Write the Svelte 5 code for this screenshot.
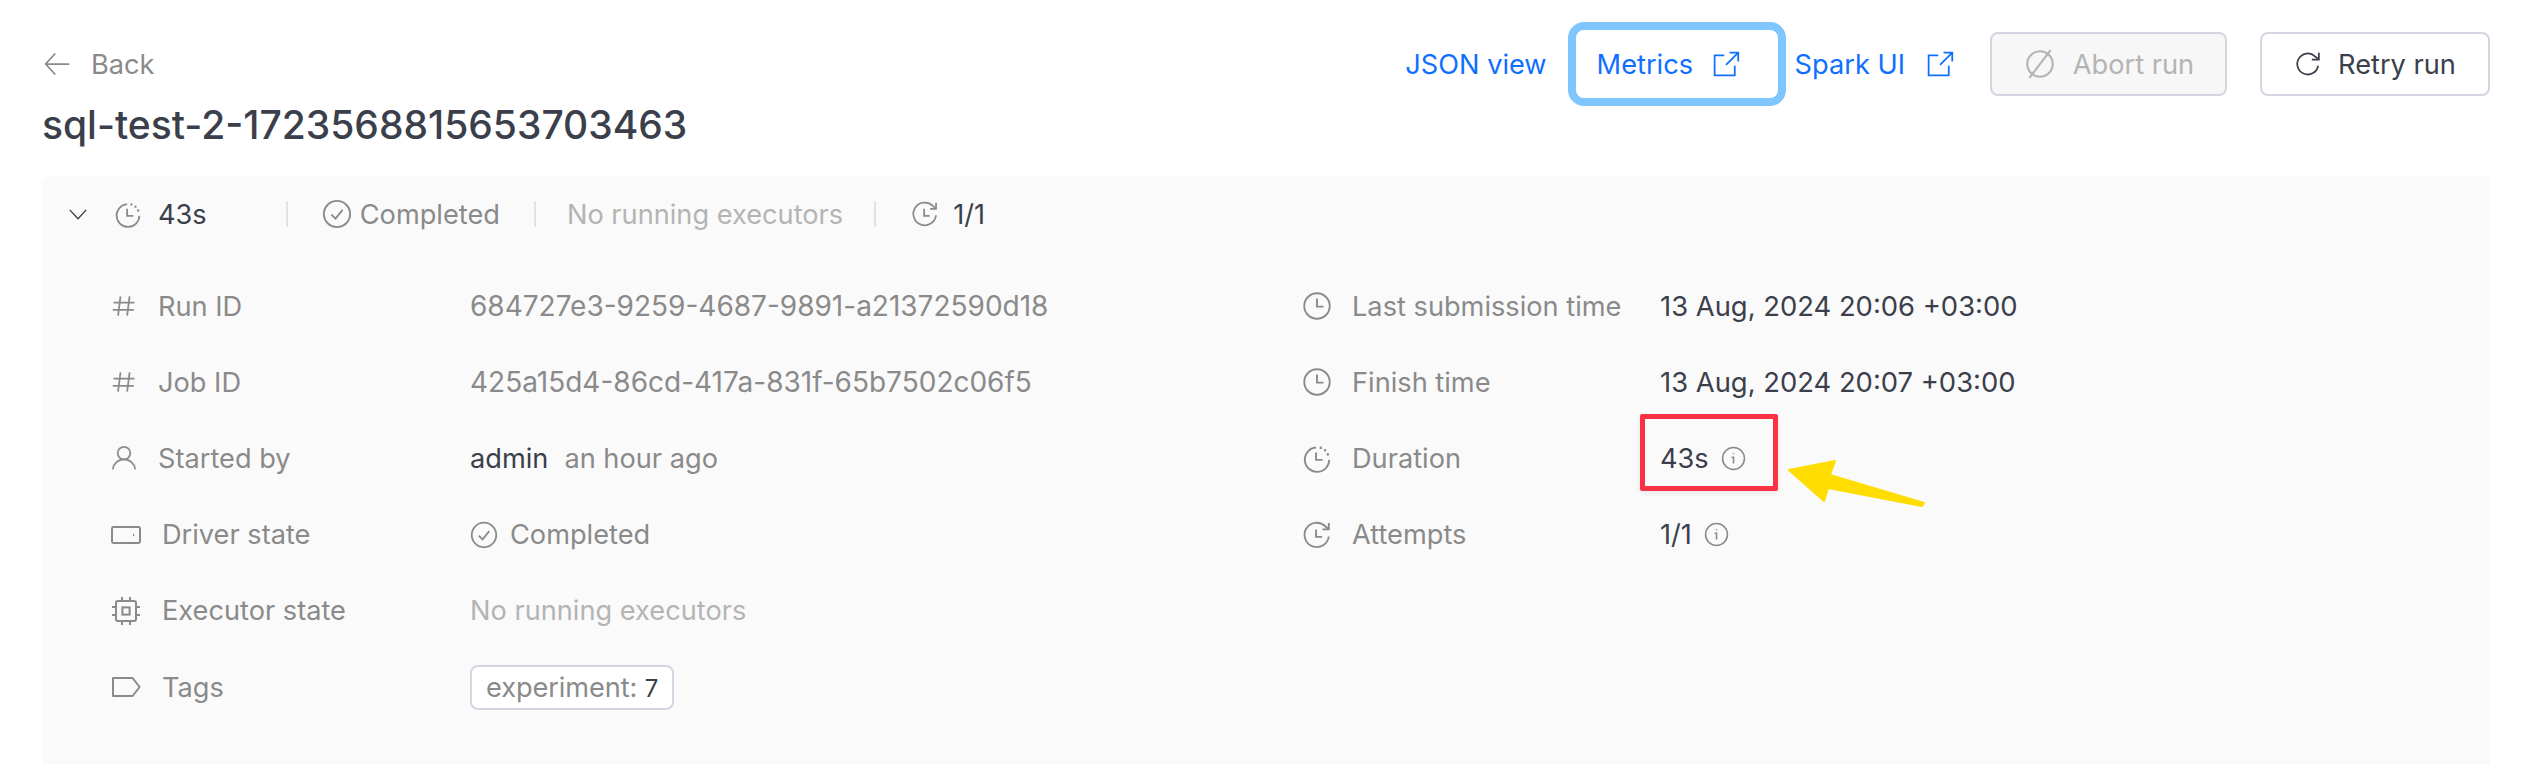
<script>
	const leftRows = [
		{ icon: 'hash', size: 28, label: 'Run ID' },
		{ icon: 'hash', size: 28, label: 'Job ID' },
		{ icon: 'user', size: 28, label: 'Started by' },
		{ icon: 'drive', size: 32, label: 'Driver state' },
		{ icon: 'chip', size: 32, label: 'Executor state' },
		{ icon: 'tag', size: 32, label: 'Tags' }
	];
</script>

{#snippet icon(name, size = 28)}
	<svg class="icon" width={size} height={size} viewBox="0 0 16 16" fill="none" stroke="currentColor" stroke-width="1">
		{#if name === 'hash'}
			<path d="M6 2.5 4.600 13.500M11.200 2.500 9.800 13.500M2 6h12M1.600 10.200h12" />
		{:else if name === 'user'}
			<circle cx="8" cy="5.200" r="3.600" />
			<path d="M1.500 14.500c.4-3 3-5.700 6.500-5.700s6.100 2.700 6.500 5.700" />
		{:else if name === 'drive'}
			<rect x="1" y="4" width="14" height="8" rx=".7" />
			<path d="M11.500 8h.6" stroke-width="1.200" />
		{:else if name === 'chip'}
			<rect x="3" y="3" width="10" height="10" rx="1" />
			<rect x="6.200" y="6.200" width="3.600" height="3.600" />
			<path d="M6 1v2M10 1v2M6 13v2M10 13v2M1 6h2M1 10h2M13 6h2M13 10h2" />
		{:else if name === 'tag'}
			<path d="M1.500 3.500h9.800L14.800 8l-3.500 4.500H1.500z" stroke-linejoin="round" />
		{:else if name === 'clock'}
			<circle cx="8" cy="8" r="6.800" />
			<path d="M8 4v4.300h3.500" />
		{:else if name === 'duration'}
			<path d="M7.500 2.400A6.500 6.500 0 1 0 14.500 9" />
			<path d="M7.500 5v4h3.500" />
			<path d="M10 2.500v.1M12.300 3.800v.1M13.800 6v.1" stroke-width="1.300" stroke-linecap="round" />
		{:else if name === 'attempts'}
			<path d="M14.300 8.800A6.500 6.500 0 1 1 12.300 3.200L14 4.800" />
			<path d="M14.300 1.600v3.400h-3.400" />
			<path d="M7.500 5v4h3.200" />
		{:else if name === 'check'}
			<circle cx="8" cy="8" r="7" />
			<path d="M5 8.300 7.200 10.500 11 5.800" />
		{:else if name === 'info'}
			<circle cx="8" cy="8" r="7" />
			<path d="M6.800 7.200H8v4M8 4.600v.6" />
		{:else if name === 'external'}
			<path d="M7 3H1.500v11.500H13V9M8 8.500 15 1.500M10 1.500h5v5" />
		{:else if name === 'abort'}
			<circle cx="8" cy="8" r="6" />
			<path d="M13 1.500 3 14.500" />
		{:else if name === 'retry'}
			<path d="M13.800 9A6 6 0 1 1 12 3.600L14 5.300" />
			<path d="M14.200 1.500v4h-4" />
		{:else if name === 'chevron'}
			<path d="M2 5 8 11.500 14 5" />
		{:else if name === 'back'}
			<path d="M15 8H1.500M7 2 1.500 8 7 14" />
		{/if}
	</svg>
{/snippet}

<div class="page">
	<header>
		<div class="heading">
			<a class="back" href="#back">{@render icon('back')} Back</a>
			<h1>sql-test-2-1723568815653703463</h1>
		</div>
		<div class="actions">
			<span class="link">JSON view</span>
			<span class="link focused">Metrics {@render icon('external')}</span>
			<span class="link spark">Spark UI {@render icon('external')}</span>
			<button class="btn abort" disabled>{@render icon('abort', 34)} Abort run</button>
			<button class="btn retry">{@render icon('retry')} Retry run</button>
		</div>
	</header>

	<section class="panel">
		<div class="summary">
			<span class="chevron">{@render icon('chevron', 22)}</span>
			<span class="muted-icon">{@render icon('duration')}</span>
			<span class="dark total">43s</span>
			<span class="sep"></span>
			<span class="muted-icon status">{@render icon('check', 30)}</span>
			<span class="muted state">Completed</span>
			<span class="sep"></span>
			<span class="faint">No running executors</span>
			<span class="sep"></span>
			<span class="muted-icon tries">{@render icon('attempts')}</span>
			<span class="dark">1/1</span>
		</div>

		<div class="fields">
			<div class="col left">
				{#each leftRows as row}
					<div class="row">
						<span class="label">{@render icon(row.icon, row.size)}{row.label}</span>
						{#if row.label === 'Run ID'}
							<span class="muted uuid">684727e3-9259-4687-9891-a21372590d18</span>
						{:else if row.label === 'Job ID'}
							<span class="muted uuid">425a15d4-86cd-417a-831f-65b7502c06f5</span>
						{:else if row.label === 'Started by'}
							<span class="value wide"><span class="dark">admin</span> <span class="muted">an hour ago</span></span>
						{:else if row.label === 'Driver state'}
							<span class="value muted">{@render icon('check')} Completed</span>
						{:else if row.label === 'Executor state'}
							<span class="faint">No running executors</span>
						{:else}
							<span class="tagchip">experiment: <b>7</b></span>
						{/if}
					</div>
				{/each}
			</div>
			<div class="col right">
				<div class="row">
					<span class="label">{@render icon('clock', 30)}Last submission time</span>
					<span class="dark date">13 Aug, 2024 20:06 +03:00</span>
				</div>
				<div class="row">
					<span class="label">{@render icon('clock', 30)}Finish time</span>
					<span class="dark date">13 Aug, 2024 20:07 +03:00</span>
				</div>
				<div class="row">
					<span class="label">{@render icon('duration', 30)}Duration</span>
					<span class="value dark">43s <span class="info">{@render icon('info', 25)}</span></span>
				</div>
				<div class="row">
					<span class="label">{@render icon('attempts', 30)}Attempts</span>
					<span class="value dark">1/1 <span class="info">{@render icon('info', 25)}</span></span>
				</div>
			</div>
		</div>
	</section>

	<div class="redbox"></div>
	<svg class="arrow" width="142" height="52" viewBox="0 0 142 52">
		<path d="M4 12 50 3 45 17 139 45 137 48 43 30 39 43Z" fill="#ffdd00" stroke="#ffdd00" stroke-width="2" stroke-linejoin="round" />
	</svg>
</div>

<style>
	:global(body) {
		background: #fff;
	}

	.page {
		box-sizing: border-box;
		color: #3a3f4b;
		font-family: Inter, "Liberation Sans", sans-serif;
		font-size: 27.2px;
		height: 764px;
		overflow: hidden;
		padding: 22px 56px 0 42px;
		position: relative;
	}

	header {
		display: flex;
		justify-content: space-between;
	}

	.back {
		align-items: center;
		color: #8a8a8a;
		display: flex;
		gap: 20px;
		height: 32px;
		margin-left: 1px;
		margin-top: 26px;
		text-decoration: none;
	}

	h1 {
		color: #3a3f4b;
		font-size: 39px;
		font-weight: 500;
		line-height: 48px;
		margin: 21px 0 0;
	}

	.actions {
		align-items: center;
		display: flex;
		height: 84px;
	}

	.link {
		align-items: center;
		color: #0f6fff;
		display: flex;
		gap: 21px;
	}

	.focused {
		border: 8px solid #7fc6ff;
		border-radius: 16px;
		box-sizing: border-box;
		gap: 19px;
		height: 84px;
		margin-left: 21px;
		padding: 0 21px;
		width: 218px;
	}

	.spark {
		margin-left: 9px;
	}

	.btn {
		align-items: center;
		background: #fff;
		border: 2px solid #d2d6e0;
		border-radius: 8px;
		box-sizing: border-box;
		color: #3a3f4b;
		display: flex;
		font: inherit;
		gap: 16px;
		height: 64px;
		justify-content: center;
	}

	.abort {
		background: #f7f7f7;
		color: #b4b4b4;
		margin-left: 36px;
		width: 237px;
	}

	.retry {
		margin-left: 33px;
		width: 230px;
	}

	.panel {
		background: #fafafa;
		border-radius: 8px;
		box-sizing: border-box;
		height: 600px;
		margin-top: 27px;
		padding: 0 24px;
	}

	.summary {
		align-items: center;
		display: flex;
		height: 76px;
	}

	.chevron {
		color: #3a3f4b;
		display: flex;
		margin-left: 1px;
		margin-right: 25px;
	}

	.muted-icon {
		color: #8a8a8a;
		display: flex;
		margin-right: 16px;
	}

	.status {
		margin-left: 3px;
		margin-right: 8px;
	}

	.state {
		margin-right: 3px;
	}

	.tries {
		margin-left: 4px;
		margin-right: 14px;
	}

	.total {
		margin-right: 48px;
	}

	.sep {
		background: #e2e2e2;
		height: 26px;
		margin: 0 31px;
		width: 2px;
	}

	.muted {
		color: #8a8a8a;
	}

	.faint {
		color: #b4b4b4;
	}

	.dark {
		color: #3a3f4b;
	}

	.uuid {
		font-size: 28px;
	}

	.date {
		font-size: 27.4px;
	}

	.fields {
		display: flex;
		margin-top: 16px;
	}

	.col {
		display: flex;
		flex-direction: column;
	}

	.left {
		padding-left: 44px;
		width: 1192px;
	}

	.row {
		align-items: center;
		display: flex;
		height: 76.2px;
	}

	.left .row > :first-child {
		width: 360px;
	}

	.right .row > :first-child {
		width: 358px;
	}

	.label {
		align-items: center;
		color: #8a8a8a;
		display: flex;
		gap: 20px;
	}

	.value {
		align-items: center;
		display: flex;
		gap: 12px;
	}

	.wide {
		gap: 16px;
	}

	.info {
		color: #8a8a8a;
		display: flex;
	}

	.tagchip {
		background: #fff;
		border: 2px solid #d2d6e0;
		border-radius: 8px;
		color: #8a8a8a;
		letter-spacing: -0.1px;
		padding: 4px 14px;
	}

	.tagchip b {
		color: #3a3f4b;
		font-size: 24px;
		font-weight: 400;
	}

	.redbox {
		border: 5px solid #fa3344;
		border-radius: 2px;
		box-shadow: 0 2px 6px rgba(0, 0, 0, 0.08);
		box-sizing: border-box;
		height: 77px;
		left: 1640px;
		position: absolute;
		top: 414px;
		width: 138px;
	}

	.arrow {
		left: 1785px;
		position: absolute;
		top: 458px;
	}
</style>
